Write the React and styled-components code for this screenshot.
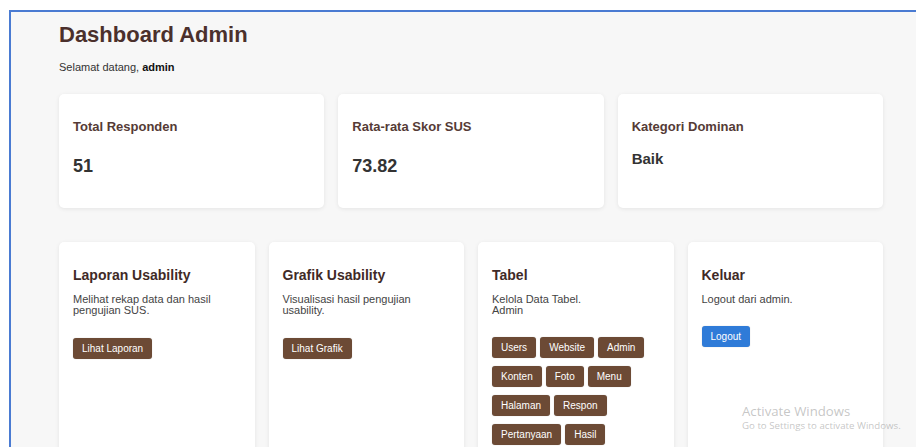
import React from "react";
import styled, { createGlobalStyle } from "styled-components";

const GlobalStyle = createGlobalStyle`
  html, body { margin: 0; padding: 0; background: #ffffff; }
  body { font-family: "Liberation Sans", Arial, sans-serif; }
  * { box-sizing: border-box; }
`;

const Frame = styled.div`
  margin: 10px 0 0 9px;
  height: 437px;
  border-top: 2px solid #4a7bd2;
  border-left: 2px solid #4a7bd2;
  background: #f7f7f7;
  overflow: hidden;
  position: relative;
`;

const Container = styled.main`
  width: 824px;
  margin-left: 48px;
  padding-top: 10px;
`;

const Title = styled.h1`
  margin: 0;
  font-size: 22px;
  font-weight: 700;
  color: #4b302c;
  line-height: 26px;
`;

const Welcome = styled.p`
  margin: 13px 0 0;
  font-size: 11px;
  color: #333;
  line-height: 13px;
  b { color: #111; }
`;

const StatGrid = styled.section`
  display: grid;
  grid-template-columns: repeat(3, 1fr);
  gap: 14px;
  margin-top: 20px;
`;

const Card = styled.div`
  background: #ffffff;
  border-radius: 5px;
  box-shadow: 0 1px 4px rgba(0, 0, 0, 0.08);
  padding: ${(p) => p.$pad || "24px 14px"};
  min-height: ${(p) => p.$minH || "auto"};
`;

const StatLabel = styled.h3`
  margin: 0;
  font-size: 13px;
  font-weight: 700;
  color: #553b36;
  line-height: 16px;
`;

const StatValue = styled.div`
  margin-top: ${(p) => (p.$small ? "14px" : "21px")};
  font-size: ${(p) => (p.$small ? "15px" : "18px")};
  font-weight: 700;
  color: #333;
  line-height: 20px;
`;

const MenuGrid = styled.section`
  display: grid;
  grid-template-columns: repeat(4, 1fr);
  gap: 14px;
  margin-top: 34px;
`;

const MenuTitle = styled.h3`
  margin: 0;
  font-size: 14px;
  font-weight: 700;
  color: #3f2a27;
  line-height: 17px;
`;

const MenuText = styled.p`
  margin: 10px 0 0;
  font-size: 11px;
  color: #444;
  line-height: 11px;
  min-height: ${(p) => (p.$lines === 1 ? "11px" : "22px")};
`;

const Button = styled.button`
  display: inline-block;
  border: none;
  border-radius: 3px;
  background: ${(p) => (p.$blue ? "#2f7bd8" : "#6c4a35")};
  color: #fff;
  font-family: "Liberation Sans", Arial, sans-serif;
  font-size: 10px;
  line-height: 12px;
  padding: 5px 9px 4px;
  height: 21px;
  cursor: pointer;
  box-shadow: 0 0 1px rgba(0, 0, 0, 0.3);
`;

const ActionRow = styled.div`
  margin-top: ${(p) => p.$top || "22px"};
`;

const ButtonWrap = styled.div`
  margin-top: 21px;
  display: flex;
  flex-wrap: wrap;
  gap: 8px 4px;
  max-width: 160px;
`;

const Watermark = styled.div`
  position: absolute;
  left: 731px;
  top: 391px;
  font-family: "Open Sans", "Noto Sans", sans-serif;
  color: rgba(150, 150, 150, 0.55);
  pointer-events: none;
`;

const WmTitle = styled.div`
  font-size: 13.2px;
  line-height: 16px;
`;

const WmSub = styled.div`
  font-size: 9.7px;
  line-height: 12px;
  margin-top: 1px;
`;

const stats = [
  { label: "Total Responden", value: "51" },
  { label: "Rata-rata Skor SUS", value: "73.82" },
  { label: "Kategori Dominan", value: "Baik", small: true },
];

const tableButtons = [
  "Users",
  "Website",
  "Admin",
  "Konten",
  "Foto",
  "Menu",
  "Halaman",
  "Respon",
  "Pertanyaan",
  "Hasil",
];

export default function App() {
  return (
    <>
      <GlobalStyle />
      <Frame>
        <Container>
          <Title>Dashboard Admin</Title>
          <Welcome>
            Selamat datang, <b>admin</b>
          </Welcome>

          <StatGrid>
            {stats.map((s) => (
              <Card key={s.label} $pad="25px 14px 28px" $minH="114px">
                <StatLabel>{s.label}</StatLabel>
                <StatValue $small={s.small}>{s.value}</StatValue>
              </Card>
            ))}
          </StatGrid>

          <MenuGrid>
            <Card $pad="25px 14px" $minH="220px">
              <MenuTitle>Laporan Usability</MenuTitle>
              <MenuText>Melihat rekap data dan hasil pengujian SUS.</MenuText>
              <ActionRow>
                <Button>Lihat Laporan</Button>
              </ActionRow>
            </Card>
            <Card $pad="25px 14px" $minH="220px">
              <MenuTitle>Grafik Usability</MenuTitle>
              <MenuText>Visualisasi hasil pengujian usability.</MenuText>
              <ActionRow>
                <Button>Lihat Grafik</Button>
              </ActionRow>
            </Card>
            <Card $pad="25px 14px" $minH="220px">
              <MenuTitle>Tabel</MenuTitle>
              <MenuText>
                Kelola Data Tabel.
                <br />
                Admin
              </MenuText>
              <ButtonWrap>
                {tableButtons.map((b) => (
                  <Button key={b}>{b}</Button>
                ))}
              </ButtonWrap>
            </Card>
            <Card $pad="25px 14px" $minH="220px">
              <MenuTitle>Keluar</MenuTitle>
              <MenuText $lines={1}>Logout dari admin.</MenuText>
              <ActionRow $top="21px">
                <Button $blue>Logout</Button>
              </ActionRow>
            </Card>
          </MenuGrid>
        </Container>
        <Watermark>
          <WmTitle>Activate Windows</WmTitle>
          <WmSub>Go to Settings to activate Windows.</WmSub>
        </Watermark>
      </Frame>
    </>
  );
}
